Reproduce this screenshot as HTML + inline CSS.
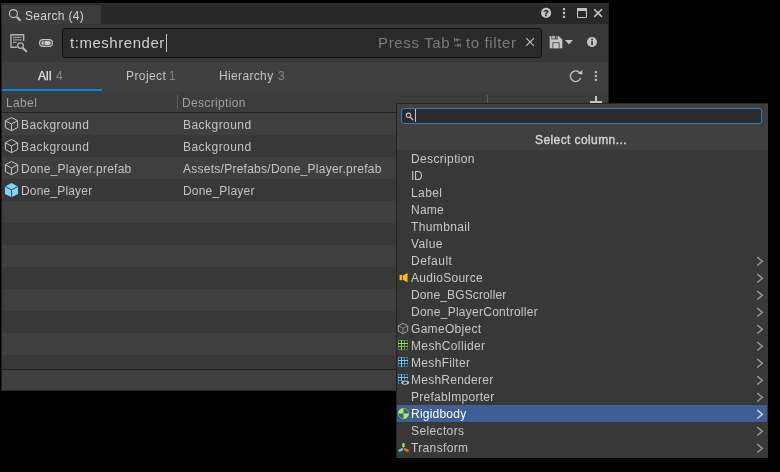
<!DOCTYPE html>
<html><head><meta charset="utf-8">
<style>
*{margin:0;padding:0;box-sizing:border-box}
html,body{width:780px;height:472px;background:#000;overflow:hidden}
body{font-family:"Liberation Sans",sans-serif;font-size:12px;color:#c4c4c4;position:relative}
.a{position:absolute}
.t{position:absolute;white-space:nowrap;will-change:transform}
svg{position:absolute;overflow:visible;will-change:transform}
.row{position:absolute;left:2px;width:606px;height:22px}
.l{background:#3f3f3f}.d{background:#383838}
.pi{position:absolute;left:397px;width:370px;height:17px}
</style></head><body>
<!-- window -->
<div class="a" style="left:1px;top:3px;width:607px;height:387px;background:#383838"></div>
<div class="a" style="left:1px;top:3px;width:1px;height:387px;background:#1e1e1e"></div>
<div class="a" style="left:608px;top:2px;width:1px;height:388px;background:#242424"></div>
<!-- dock tab bar -->
<div class="a" style="left:1px;top:3px;width:607px;height:21px;background:#282828"></div>
<div class="a" style="left:1px;top:3px;width:607px;height:2px;background:#2c2c2c"></div>
<div class="a" style="left:2px;top:5px;width:99px;height:19px;background:#3c3c3c;border-radius:0 2px 0 0"></div>
<!-- toolbar -->
<div class="a" style="left:2px;top:24px;width:606px;height:38px;background:#383838"></div>
<div class="a" style="left:62px;top:28px;width:480px;height:30px;background:#2a2a2a;border:1px solid #0f0f0f;border-radius:3px"></div>
<div class="a" style="left:166px;top:34px;width:1px;height:18px;background:#c4c4c4"></div>
<!-- tabs strip -->
<div class="a" style="left:2px;top:62px;width:606px;height:29px;background:#404040"></div>
<div class="a" style="left:2px;top:89px;width:100px;height:2px;background:#0a84d4"></div>
<!-- header -->
<div class="a" style="left:2px;top:91px;width:606px;height:21px;background:#3c3c3c"></div>
<div class="a" style="left:2px;top:112px;width:606px;height:1px;background:#232323"></div>
<div class="a" style="left:177px;top:95px;width:1px;height:14px;background:#5e5e5e"></div>
<div class="a" style="left:487px;top:95px;width:1px;height:14px;background:#5e5e5e"></div>
<!-- rows -->
<div class="row l" style="top:113px;height:22px"></div>
<div class="row d" style="top:135px;height:22px"></div>
<div class="row l" style="top:157px;height:22px"></div>
<div class="row d" style="top:179px;height:22px"></div>
<div class="row l" style="top:201px;height:22px"></div>
<div class="row d" style="top:223px;height:22px"></div>
<div class="row l" style="top:245px;height:22px"></div>
<div class="row d" style="top:267px;height:22px"></div>
<div class="row l" style="top:289px;height:22px"></div>
<div class="row d" style="top:311px;height:22px"></div>
<div class="row l" style="top:333px;height:22px"></div>
<div class="row d" style="top:355px;height:14px"></div>
<div class="a" style="left:2px;top:369px;width:606px;height:1px;background:#232323"></div>
<div class="a" style="left:2px;top:370px;width:606px;height:20px;background:#404040"></div>
<div class="a" style="left:1px;top:390px;width:608px;height:1px;background:#2a2a2a"></div>
<!-- plus icon -->
<div class="a" style="left:595px;top:96px;width:2px;height:8px;background:#c4c4c4"></div>
<div class="a" style="left:590px;top:101px;width:12px;height:2px;background:#c4c4c4"></div>
<!-- tab magnifier -->
<svg style="left:0;top:0" width="780" height="472" viewBox="0 0 780 472">
<g fill="none" stroke="#c4c4c4">
<circle cx="13.4" cy="13.6" r="4" stroke-width="1.15"/>
<path d="M17.3 17.5L19.8 20" stroke-width="2.1" stroke-linecap="round"/>
</g>
<!-- query builder icon -->
<g fill="none" stroke="#b4b4b4" stroke-width="1.2">
<path d="M17 47.2H11V34.7H23.6V41" stroke-width="1.4"/>
<path d="M13 37.4H21.6M13 39.9H21.6M13 42.4H16.6" stroke-width="1.4" stroke="#9a9a9a"/>
<circle cx="20.5" cy="45.6" r="2.8" stroke-width="1.3"/>
<path d="M23 48.2L26.2 51.2" stroke-width="2.2" stroke-linecap="round"/>
</g>
<!-- pill toggle -->
<rect x="39.6" y="39.6" width="12.8" height="6.8" rx="3.4" fill="none" stroke="#c4c4c4" stroke-width="1.2"/>
<rect x="41.3" y="41.1" width="9.5" height="3.9" rx="1.95" fill="#c8c8c8"/>
<rect x="43.6" y="41.2" width="0.9" height="3.8" fill="#383838"/>
<!-- help -->
<circle cx="546.1" cy="12.9" r="5.1" fill="#c4c4c4"/>
<text x="546.1" y="16.2" font-family="Liberation Sans" font-weight="700" font-size="9" text-anchor="middle" fill="#282828" stroke="#282828" stroke-width="0.3">?</text>
<!-- kebab 1 -->
<g fill="#c4c4c4"><rect x="562.9" y="8.1" width="2.2" height="2.2"/><rect x="562.9" y="11.9" width="2.2" height="2.2"/><rect x="562.9" y="15.7" width="2.2" height="2.2"/></g>
<!-- maximize -->
<rect x="577.55" y="8.6" width="8.9" height="8.9" rx="0.8" fill="none" stroke="#c4c4c4" stroke-width="1.1"/>
<rect x="577" y="8.2" width="10" height="2.8" fill="#c4c4c4"/>
<!-- close -->
<path d="M594.2 9.2L601.9 16.9M601.9 9.2L594.2 16.9" stroke="#c4c4c4" stroke-width="1.6" fill="none"/>
<!-- clear X -->
<path d="M526.2 38.1L534 45.9M534 38.1L526.2 45.9" stroke="#c4c4c4" stroke-width="1.1" fill="none"/>
<!-- tab symbol -->
<g stroke="#747474" stroke-width="1" fill="none">
<path d="M460.8 39.8H455.4M454.6 37.8V41.8"/>
<path d="M454.4 45.3H459.8M460.6 43.3V47.3"/>
</g>
<path d="M455 39.8L457.8 37.6V42Z" fill="#747474"/>
<path d="M460.2 45.3L457.4 43.1V47.5Z" fill="#747474"/>
<!-- save -->
<path d="M549.7 35.9H558.6L562.3 39.5V48.3H549.7Z" fill="#c6c6c6"/>
<rect x="551.4" y="35.9" width="6.5" height="3.5" fill="#454545"/>
<rect x="552.1" y="35.9" width="2.9" height="2.8" fill="#adadad"/>
<rect x="556.5" y="35.9" width="0.8" height="2.8" fill="#b8b8b8"/>
<rect x="552.5" y="42.3" width="7" height="6" fill="#3a3a3a"/>
<rect x="553.3" y="43.1" width="5.4" height="5.2" fill="#c8c8c8"/>
<path d="M564.9 39.9H573L568.95 44.5Z" fill="#c0c0c0"/>
<!-- info -->
<circle cx="592" cy="42" r="5" fill="#c4c4c4"/>
<rect x="591.2" y="41" width="1.7" height="4" fill="#383838"/>
<rect x="591.2" y="38.6" width="1.7" height="1.6" fill="#383838"/>
<!-- refresh -->
<path d="M579.8 72.8A5.3 5.3 0 1 0 580.7 78.1" fill="none" stroke="#c4c4c4" stroke-width="1.3"/>
<path d="M582.3 69.9V74.5L577.6 73.8Z" fill="#c4c4c4"/>
<!-- kebab 2 -->
<g fill="#c4c4c4"><rect x="594.8" y="71.1" width="2.1" height="2.1"/><rect x="594.8" y="74.9" width="2.1" height="2.1"/><rect x="594.8" y="78.8" width="2.1" height="2.1"/></g>
<!-- cubes -->
<g id="cube" fill="none" stroke="#c4c4c4" stroke-width="1" stroke-linejoin="round">
<path d="M11.5 117.5L17.6 120.7V127.6L11.5 130.7L5.4 127.6V120.7Z"/>
<path d="M5.6 120.9L11.5 124L17.4 120.9M11.5 124V130.5"/>
</g>
<g fill="none" stroke="#c4c4c4" stroke-width="1" stroke-linejoin="round" transform="translate(0 22)">
<path d="M11.5 117.5L17.6 120.7V127.6L11.5 130.7L5.4 127.6V120.7Z"/>
<path d="M5.6 120.9L11.5 124L17.4 120.9M11.5 124V130.5"/>
</g>
<g fill="none" stroke="#c4c4c4" stroke-width="1" stroke-linejoin="round" transform="translate(0 44)">
<path d="M11.5 117.5L17.6 120.7V127.6L11.5 130.7L5.4 127.6V120.7Z"/>
<path d="M5.6 120.9L11.5 124L17.4 120.9M11.5 124V130.5"/>
</g>
<g transform="translate(0 66)">
<path d="M11.5 117L18 120.4V127.9L11.5 131.2L5 127.9V120.4Z" fill="#7fd6fd"/>
<path d="M5.3 120.6L11.5 123.9L17.7 120.6M11.5 123.9V131" fill="none" stroke="#33586b" stroke-width="1.1"/>
</g>
</svg>

<!-- popup -->
<div class="a" style="left:396px;top:103px;width:372px;height:355px;background:#383838"></div>
<div class="a" style="left:396px;top:103px;width:372px;height:47px;background:#404040"></div>
<div class="a" style="left:396px;top:103px;width:1px;height:355px;background:#222"></div>
<div class="a" style="left:396px;top:103px;width:372px;height:1px;background:#262626"></div>
<div class="a" style="left:401px;top:108px;width:361px;height:16px;background:#2a2a2a;border:1px solid #3a79bb;border-radius:3px"></div>
<div class="a" style="left:415px;top:109px;width:1px;height:13px;background:#c4c4c4"></div>
<div class="a pisel" style="left:397px;top:405px;width:370px;height:17px;background:#3e5f96"></div>
<svg style="left:0;top:0" width="780" height="472" viewBox="0 0 780 472">
<!-- popup search magnifier -->
<g fill="none" stroke="#c4c4c4">
<circle cx="408.5" cy="115.3" r="2.2" stroke-width="1.05"/>
<path d="M410.3 117.2L412.8 119.7" stroke-width="1.3" stroke-linecap="round"/>
</g>
<!-- chevrons -->
<path d="M757.3 257.1L762.3 261.3L757.3 265.5" fill="none" stroke="#969696" stroke-width="1.5"/>
<path d="M757.3 274.1L762.3 278.3L757.3 282.5" fill="none" stroke="#969696" stroke-width="1.5"/>
<path d="M757.3 291.1L762.3 295.3L757.3 299.5" fill="none" stroke="#969696" stroke-width="1.5"/>
<path d="M757.3 308.1L762.3 312.3L757.3 316.5" fill="none" stroke="#969696" stroke-width="1.5"/>
<path d="M757.3 325.1L762.3 329.3L757.3 333.5" fill="none" stroke="#969696" stroke-width="1.5"/>
<path d="M757.3 342.1L762.3 346.3L757.3 350.5" fill="none" stroke="#969696" stroke-width="1.5"/>
<path d="M757.3 359.1L762.3 363.3L757.3 367.5" fill="none" stroke="#969696" stroke-width="1.5"/>
<path d="M757.3 376.1L762.3 380.3L757.3 384.5" fill="none" stroke="#969696" stroke-width="1.5"/>
<path d="M757.3 393.1L762.3 397.3L757.3 401.5" fill="none" stroke="#969696" stroke-width="1.5"/>
<path d="M757.3 410.1L762.3 414.3L757.3 418.5" fill="none" stroke="#ccd3e0" stroke-width="1.5"/>
<path d="M757.3 427.1L762.3 431.3L757.3 435.5" fill="none" stroke="#969696" stroke-width="1.5"/>
<path d="M757.3 444.1L762.3 448.3L757.3 452.5" fill="none" stroke="#969696" stroke-width="1.5"/>
<!-- audio -->
<rect x="399.6" y="275" width="2.4" height="5.2" fill="#ffc107"/>
<path d="M402.8 275.4L407.5 273V282.2L402.8 279.8Z" fill="#ffc107"/>
<!-- gameobject cube -->
<g fill="none" stroke="#a6a6a6" stroke-width="0.9" stroke-linejoin="round">
<path d="M403 323.3L407.7 325.8V331.2L403 333.6L398.3 331.2V325.8Z"/>
<path d="M398.5 326L403 328.4L407.5 326M403 328.4V333.4" stroke="#8e8e8e"/>
</g>
<!-- mesh collider (green grid) -->
<g><rect x="398" y="340" width="10" height="10" fill="#27222e"/>
<path d="M398.5 340V350" stroke="#5a8a2a" stroke-width="1"/>
<path d="M404.5 340V350" stroke="#76b733" stroke-width="1"/>
<path d="M407.5 340V350" stroke="#4d7527" stroke-width="1"/>
<path d="M398 340.5H408" stroke="#5a8a2a" stroke-width="1"/>
<path d="M398 346.5H408" stroke="#76b733" stroke-width="1"/>
<path d="M398 349.5H408" stroke="#4d7527" stroke-width="1"/>
<path d="M401.5 340V350M398 343.5H408" stroke="#9be83e" stroke-width="1"/></g>
<!-- mesh filter -->
<g><rect x="398" y="357" width="10" height="10" fill="#232a36"/>
<path d="M398.5 357V367" stroke="#3f7d9f" stroke-width="1"/>
<path d="M404.5 357V367" stroke="#4f9fc8" stroke-width="1"/>
<path d="M407.5 357V367" stroke="#36698a" stroke-width="1"/>
<path d="M398 357.5H408" stroke="#3f7d9f" stroke-width="1"/>
<path d="M398 363.5H408" stroke="#4f9fc8" stroke-width="1"/>
<path d="M398 366.5H408" stroke="#36698a" stroke-width="1"/>
<path d="M401.5 357V367M398 360.5H408" stroke="#6fd0ff" stroke-width="1"/></g>
<!-- mesh renderer -->
<g><rect x="398" y="374" width="10" height="10" fill="#232a36"/>
<path d="M398.5 374V384" stroke="#3f7d9f" stroke-width="1"/>
<path d="M404.5 374V384" stroke="#4f9fc8" stroke-width="1"/>
<path d="M407.5 374V384" stroke="#36698a" stroke-width="1"/>
<path d="M398 374.5H408" stroke="#3f7d9f" stroke-width="1"/>
<path d="M398 380.5H408" stroke="#4f9fc8" stroke-width="1"/>
<path d="M398 383.5H408" stroke="#36698a" stroke-width="1"/>
<path d="M401.5 374V384M398 377.5H408" stroke="#6fd0ff" stroke-width="1"/>
<ellipse cx="405.2" cy="382.6" rx="4.6" ry="2.9" fill="#383838"/>
<ellipse cx="405.2" cy="382.6" rx="3.9" ry="2.2" fill="#c6c6c6"/>
<ellipse cx="405.2" cy="382.7" rx="2" ry="1.2" fill="#444"/>
</g>
<!-- rigidbody -->
<g>
<circle cx="403.5" cy="413.5" r="5.2" fill="none" stroke="#7dbd42" stroke-width="0.9"/>
<path d="M403.5 413.5V408.3A5.2 5.2 0 0 0 398.3 413.5Z" fill="#aff058"/>
<path d="M403.5 413.5V418.7A5.2 5.2 0 0 0 408.7 413.5Z" fill="#aff058"/>
</g>
<!-- transform -->
<g fill="none" stroke-width="2.4" stroke-linecap="round">
<path d="M403.45 444.2V446.2" stroke="#9fe24a"/>
<path d="M402.2 449.3L399.6 450.6" stroke="#5ecbf5"/>
<path d="M405 449.2L407.7 450.6" stroke="#f26b3a"/>
</g>
</svg>

<div class="t" style="left:24.8px;top:9px;font-size:12px;line-height:14px;height:14px;color:#d2d2d2;font-weight:400;letter-spacing:0.297px">Search (4)</div>
<div class="t" style="left:69.8px;top:34px;font-size:15px;line-height:18px;height:18px;color:#d2d2d2;font-weight:400;letter-spacing:0.535px">t:meshrender</div>
<div class="t" style="left:378.0px;top:34px;font-size:15px;line-height:18px;height:18px;color:#7b7b7b;font-weight:400;letter-spacing:0.651px">Press Tab</div>
<div class="t" style="left:465.9px;top:34px;font-size:15px;line-height:18px;height:18px;color:#7b7b7b;font-weight:400;letter-spacing:0.632px">to filter</div>
<div class="t" style="left:38.1px;top:69px;font-size:12px;line-height:14px;height:14px;color:#e6e6e6;font-weight:400;letter-spacing:0.119px;-webkit-text-stroke:0.25px #e6e6e6">All</div>
<div class="t" style="left:55.5px;top:69px;font-size:12px;line-height:14px;height:14px;color:#858585;font-weight:400;letter-spacing:0.313px">4</div>
<div class="t" style="left:125.7px;top:69px;font-size:12px;line-height:14px;height:14px;color:#c4c4c4;font-weight:400;letter-spacing:0.420px">Project</div>
<div class="t" style="left:169.3px;top:69px;font-size:12px;line-height:14px;height:14px;color:#858585;font-weight:400;letter-spacing:-2.088px">1</div>
<div class="t" style="left:218.8px;top:69px;font-size:12px;line-height:14px;height:14px;color:#c4c4c4;font-weight:400;letter-spacing:0.349px">Hierarchy</div>
<div class="t" style="left:277.7px;top:69px;font-size:12px;line-height:14px;height:14px;color:#858585;font-weight:400;letter-spacing:0.312px">3</div>
<div class="t" style="left:5.8px;top:96px;font-size:12px;line-height:14px;height:14px;color:#a0a0a0;font-weight:400;letter-spacing:0.365px">Label</div>
<div class="t" style="left:182.1px;top:96px;font-size:12px;line-height:14px;height:14px;color:#a0a0a0;font-weight:400;letter-spacing:0.343px">Description</div>
<div class="t" style="left:21.0px;top:118px;font-size:12px;line-height:14px;height:14px;color:#c4c4c4;font-weight:400;letter-spacing:0.425px">Background</div>
<div class="t" style="left:182.7px;top:118px;font-size:12px;line-height:14px;height:14px;color:#c4c4c4;font-weight:400;letter-spacing:0.455px">Background</div>
<div class="t" style="left:21.0px;top:140px;font-size:12px;line-height:14px;height:14px;color:#c4c4c4;font-weight:400;letter-spacing:0.425px">Background</div>
<div class="t" style="left:182.7px;top:140px;font-size:12px;line-height:14px;height:14px;color:#c4c4c4;font-weight:400;letter-spacing:0.455px">Background</div>
<div class="t" style="left:21.0px;top:162px;font-size:12px;line-height:14px;height:14px;color:#c4c4c4;font-weight:400;letter-spacing:0.246px">Done_Player.prefab</div>
<div class="t" style="left:182.7px;top:162px;font-size:12px;line-height:14px;height:14px;color:#c4c4c4;font-weight:400;letter-spacing:0.257px">Assets/Prefabs/Done_Player.prefab</div>
<div class="t" style="left:21.0px;top:184px;font-size:12px;line-height:14px;height:14px;color:#c4c4c4;font-weight:400;letter-spacing:0.175px">Done_Player</div>
<div class="t" style="left:182.7px;top:184px;font-size:12px;line-height:14px;height:14px;color:#c4c4c4;font-weight:400;letter-spacing:0.202px">Done_Player</div>
<div class="t" style="left:535.0px;top:133px;font-size:12px;line-height:14px;height:14px;color:#d2d2d2;font-weight:400;letter-spacing:0.408px;-webkit-text-stroke:0.4px #d2d2d2">Select column...</div>
<div class="t" style="left:410.9px;top:152px;font-size:12px;line-height:14px;height:14px;color:#c8c8c8;font-weight:400;letter-spacing:0.352px">Description</div>
<div class="t" style="left:410.9px;top:169px;font-size:12px;line-height:14px;height:14px;color:#c8c8c8;font-weight:400;letter-spacing:-0.300px">ID</div>
<div class="t" style="left:410.9px;top:186px;font-size:12px;line-height:14px;height:14px;color:#c8c8c8;font-weight:400;letter-spacing:0.405px">Label</div>
<div class="t" style="left:410.9px;top:203px;font-size:12px;line-height:14px;height:14px;color:#c8c8c8;font-weight:400;letter-spacing:0.221px">Name</div>
<div class="t" style="left:410.9px;top:220px;font-size:12px;line-height:14px;height:14px;color:#c8c8c8;font-weight:400;letter-spacing:0.374px">Thumbnail</div>
<div class="t" style="left:410.9px;top:237px;font-size:12px;line-height:14px;height:14px;color:#c8c8c8;font-weight:400;letter-spacing:0.418px">Value</div>
<div class="t" style="left:410.9px;top:254px;font-size:12px;line-height:14px;height:14px;color:#c8c8c8;font-weight:400;letter-spacing:0.481px">Default</div>
<div class="t" style="left:410.9px;top:271px;font-size:12px;line-height:14px;height:14px;color:#c8c8c8;font-weight:400;letter-spacing:0.289px">AudioSource</div>
<div class="t" style="left:410.9px;top:288px;font-size:12px;line-height:14px;height:14px;color:#c8c8c8;font-weight:400;letter-spacing:0.135px">Done_BGScroller</div>
<div class="t" style="left:410.9px;top:305px;font-size:12px;line-height:14px;height:14px;color:#c8c8c8;font-weight:400;letter-spacing:0.262px">Done_PlayerController</div>
<div class="t" style="left:410.9px;top:322px;font-size:12px;line-height:14px;height:14px;color:#c8c8c8;font-weight:400;letter-spacing:0.304px">GameObject</div>
<div class="t" style="left:410.9px;top:339px;font-size:12px;line-height:14px;height:14px;color:#c8c8c8;font-weight:400;letter-spacing:0.364px">MeshCollider</div>
<div class="t" style="left:410.9px;top:356px;font-size:12px;line-height:14px;height:14px;color:#c8c8c8;font-weight:400;letter-spacing:0.338px">MeshFilter</div>
<div class="t" style="left:410.9px;top:373px;font-size:12px;line-height:14px;height:14px;color:#c8c8c8;font-weight:400;letter-spacing:0.252px">MeshRenderer</div>
<div class="t" style="left:410.9px;top:390px;font-size:12px;line-height:14px;height:14px;color:#c8c8c8;font-weight:400;letter-spacing:0.240px">PrefabImporter</div>
<div class="t" style="left:410.9px;top:407px;font-size:12px;line-height:14px;height:14px;color:#ffffff;font-weight:400;letter-spacing:0.225px">Rigidbody</div>
<div class="t" style="left:410.9px;top:424px;font-size:12px;line-height:14px;height:14px;color:#c8c8c8;font-weight:400;letter-spacing:0.374px">Selectors</div>
<div class="t" style="left:410.9px;top:441px;font-size:12px;line-height:14px;height:14px;color:#c8c8c8;font-weight:400;letter-spacing:0.352px">Transform</div>
</body></html>
